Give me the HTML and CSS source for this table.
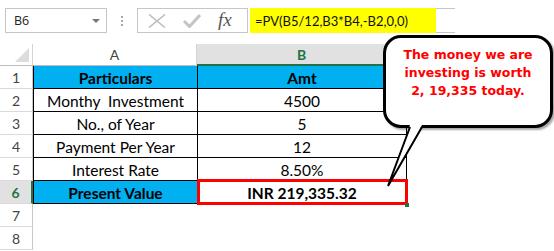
FILE: index.html
```html
<!DOCTYPE html>
<html>
<head>
<meta charset="utf-8">
<link rel="stylesheet" href="styles.css">
</head>
<body>
<div class="toolbar">
  <div class="namebox"><span>B6</span><span class="arrow"></span></div>
  <div class="dots"><i></i><i></i><i></i></div>
  <div class="fxbox">
    <svg class="ico" width="18" height="14" viewBox="0 0 18 14"><path d="M1 0.5 L17 13.5 M17 0.5 L1 13.5" stroke="#bdbdbd" stroke-width="1.6" fill="none"/></svg>
    <svg class="ico chk" width="18" height="14" viewBox="0 0 18 14"><path d="M1 7 L6.5 12.5 L17 1" stroke="#c4c4c4" stroke-width="3" fill="none"/></svg>
    <span class="fx">fx</span>
  </div>
  <div class="formula"><span class="fval">=PV(B5/12,B3*B4,-B2,0,0)</span></div>
</div>
<div class="sheet">
  <div class="corner"><span class="tri"></span></div>
  <div class="colhdr">A</div>
  <div class="colhdr sel">B</div>
  <div class="rest"></div>

  <div class="rowhdr">1</div>
  <div class="cell blue bold">Particulars</div>
  <div class="cell blue bold right">Amt</div>
  <div class="rest"></div>

  <div class="rowhdr">2</div>
  <div class="cell">Monthy&nbsp; Investment</div>
  <div class="cell right">4500</div>
  <div class="rest"></div>

  <div class="rowhdr">3</div>
  <div class="cell">No., of Year</div>
  <div class="cell right">5</div>
  <div class="rest"></div>

  <div class="rowhdr">4</div>
  <div class="cell">Payment Per Year</div>
  <div class="cell right">12</div>
  <div class="rest"></div>

  <div class="rowhdr">5</div>
  <div class="cell">Interest Rate</div>
  <div class="cell right">8.50%</div>
  <div class="rest"></div>

  <div class="rowhdr sel">6</div>
  <div class="cell blue bold">Present Value</div>
  <div class="cell bold right active">INR 219,335.32<span class="handle"></span></div>
  <div class="rest"></div>

  <div class="rowhdr">7</div>
  <div class="empty"></div>
  <div class="empty"></div>
  <div class="rest"></div>

  <div class="rowhdr">8</div>
  <div class="empty"></div>
  <div class="empty"></div>
  <div class="rest"></div>
</div>
<div class="callout">The money we are<br>investing is worth<br>2, 19,335 today.</div>
<svg class="tail" width="50" height="70" viewBox="0 0 50 70">
  <polygon points="30,3 42,3 8,64" fill="#fff"/>
  <polyline points="30,5 8,64 42,5" fill="none" stroke="#000" stroke-width="2" stroke-linejoin="miter"/>
</svg>
</body>
</html>
```
FILE: styles.css
```css
html, body { margin: 0; padding: 0; background: #fff; }
body { width: 554px; height: 251px; overflow: hidden; position: relative; font-family: Lato, "Open Sans", sans-serif; }

.toolbar { height: 44px; display: flex; align-items: flex-start; padding-top: 8px; box-sizing: border-box; }
.namebox { margin-left: 5px; width: 102px; height: 25px; box-sizing: border-box; border: 1px solid #c6c6c6; display: flex; align-items: center; justify-content: space-between; padding: 0 6px 0 8px; font-family: "Open Sans", sans-serif; font-size: 12.5px; color: #222; }
.arrow { width: 0; height: 0; border-left: 4px solid transparent; border-right: 4px solid transparent; border-top: 4px solid #777; }
.dots { width: 30px; height: 25px; display: flex; flex-direction: column; align-items: center; justify-content: center; gap: 2px; }
.dots i { width: 2px; height: 2px; background: #a8a8a8; display: block; }
.fxbox { width: 111px; height: 25px; box-sizing: border-box; border: 1px solid #c6c6c6; display: flex; align-items: center; padding-left: 10px; }
.ico { display: block; }
.chk { margin-left: 17px; }
.fx { margin-left: 17px; font-family: "Liberation Serif", serif; font-style: italic; font-size: 19px; color: #555; letter-spacing: 0; margin-top: -2px; }
.formula { margin-left: 2px; width: 205px; height: 25px; box-sizing: border-box; border-top: 1px solid #c6c6c6; border-bottom: 1px solid #c6c6c6; }
.fval { display: flex; align-items: center; width: 186px; height: 25px; margin-top: -1px; background: #ffff00; padding-left: 5px; box-sizing: border-box; font-family: Lato, sans-serif; font-size: 13px; color: #111; }

.sheet { display: grid; grid-template-columns: 33px 164px 210px 1fr; grid-template-rows: 22px repeat(8, 23px); }
.corner { border-right: 1px solid #d4d4d4; border-bottom: 1px solid #bdbdbd; box-sizing: border-box; position: relative; }
.tri { position: absolute; right: 3px; bottom: 3px; width: 0; height: 0; border-left: 14px solid transparent; border-bottom: 14px solid #dcdcdc; }
.colhdr { box-sizing: border-box; border-right: 1px solid #d4d4d4; border-bottom: 1px solid #bdbdbd; display: flex; align-items: center; justify-content: center; font-size: 14px; color: #444; }
.colhdr.sel { background: #e1e1e1; color: #217346; font-weight: bold; border-bottom: 2px solid #217346; }
.rest { border-bottom: 1px solid transparent; }
.rowhdr { box-sizing: border-box; border-right: 1px solid #c8c8c8; border-bottom: 1px solid #dadada; display: flex; align-items: center; justify-content: center; font-size: 14px; color: #444; }
.rowhdr.sel { background: #e1e1e1; color: #217346; font-weight: bold; border-right: 2px solid #217346; }
.cell { box-sizing: border-box; border-bottom: 1px solid #000; border-left: 1px solid #000; display: flex; align-items: center; justify-content: center; font-size: 15.5px; color: #000; padding-top: 1px; }
.cell.right { border-right: 1px solid #000; }
.cell.blue { background: #00b0f0; }
.bold { font-weight: bold; }
.cell.active { position: relative; }
.cell.active::after { content: ""; position: absolute; left: -1px; top: -2px; right: -2px; bottom: -2px; border: 3px solid #ff0000; }
.handle { position: absolute; right: -3px; bottom: -4px; width: 4px; height: 4px; background: #217346; z-index: 2; }
.empty { }

.callout { position: absolute; left: 383px; top: 35px; width: 170px; height: 93px; box-sizing: border-box; border: 3px solid #000; border-radius: 18px; background: #fff; box-shadow: 2px 2px 2px rgba(0,0,0,0.35); text-align: center; font-family: "DejaVu Sans", Verdana, sans-serif; font-weight: bold; font-size: 12.5px; line-height: 18px; color: #ff0000; padding-top: 8px; }
.tail { position: absolute; left: 380px; top: 122px; }
```
